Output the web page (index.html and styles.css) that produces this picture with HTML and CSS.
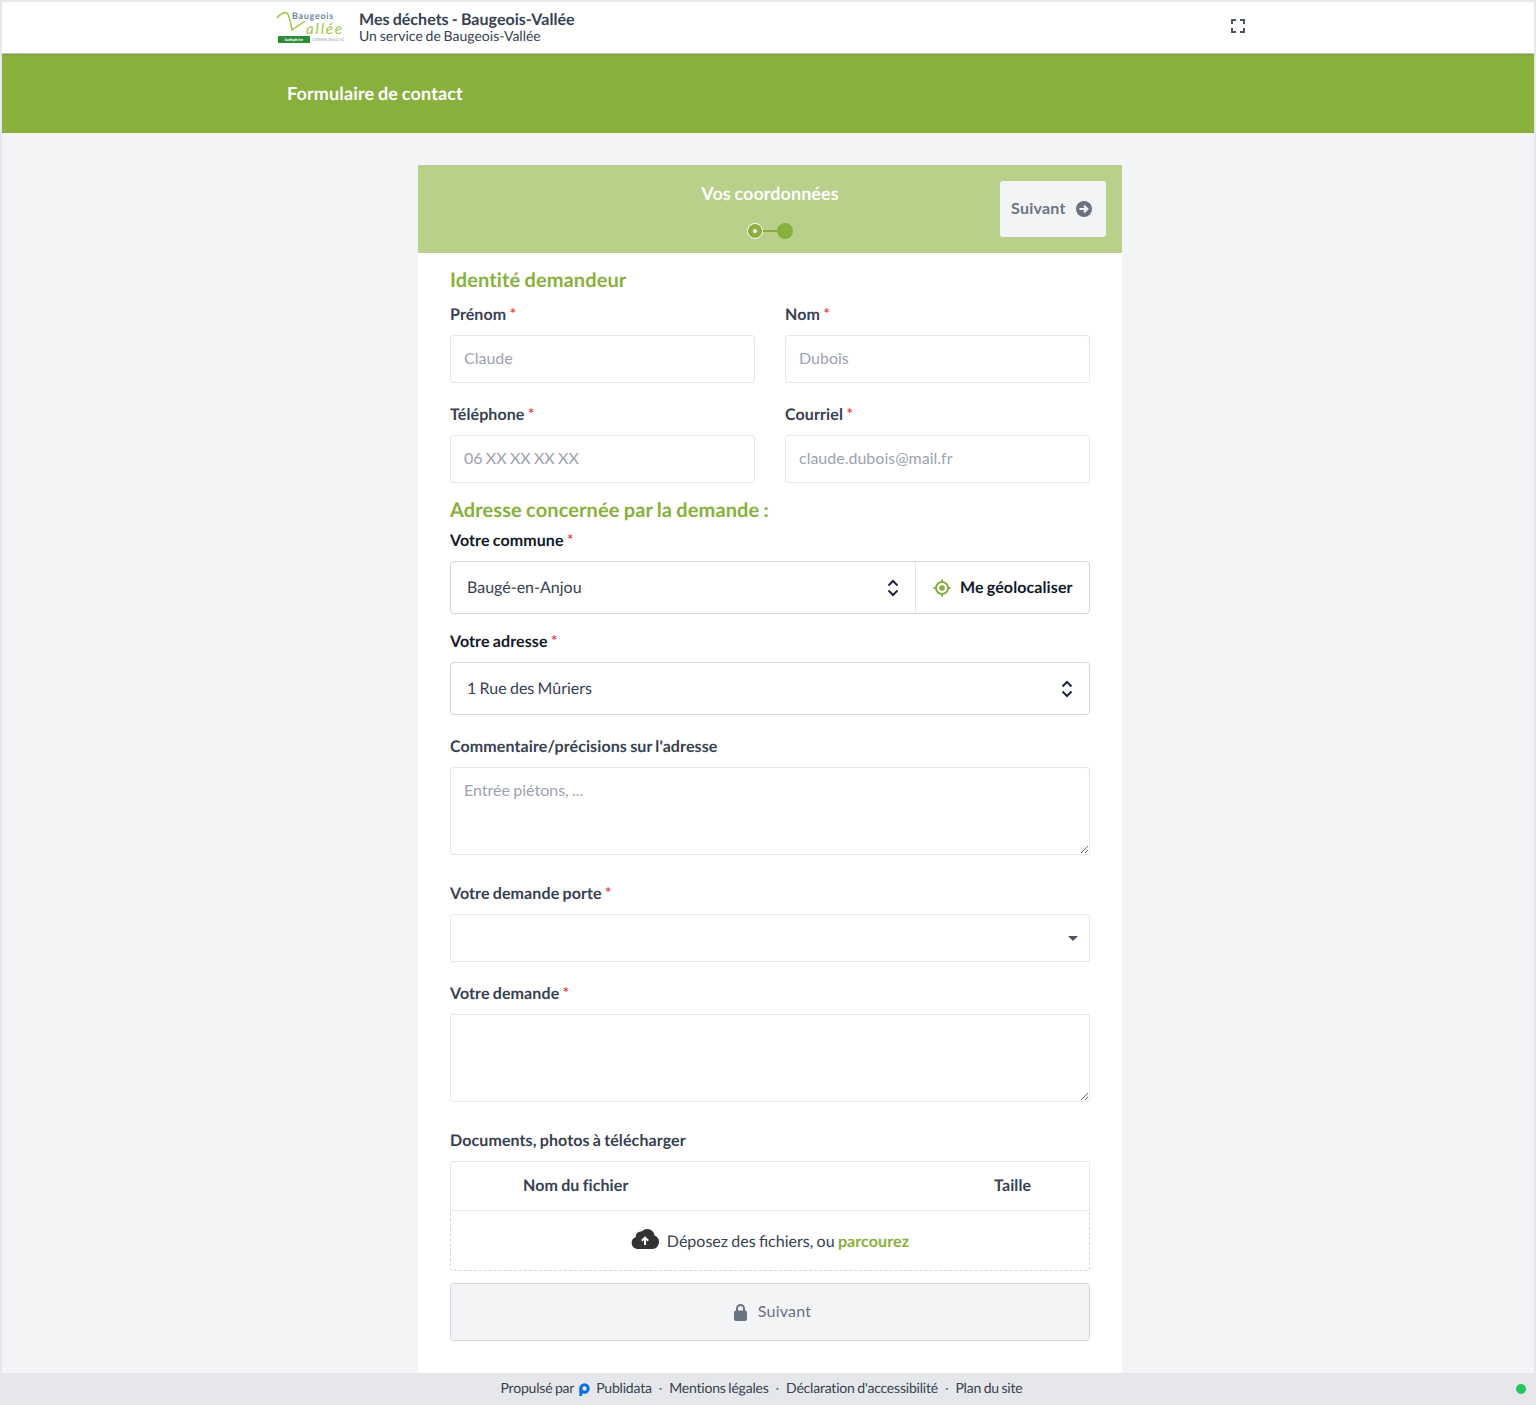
FILE: index.html
```html
<!DOCTYPE html>
<html lang="fr">
<head>
    <meta charset="UTF-8">
    <title>Formulaire de contact</title>
    <link rel="stylesheet" href="styles.css">
</head>
<body>
<header class="topbar">
    <div class="logo">
        <span class="logo-top">Baugeois</span>
        <svg class="logo-swoosh" width="68" height="24" viewBox="0 0 68 24">
            <path d="M1 7 Q6 1 11 2 Q13 3 16 19 Q22 15 29 10" fill="none" stroke="#9cc63f" stroke-width="1.500"/>
        </svg>
        <span class="logo-name">allée</span>
        <span class="logo-bar"><span class="logo-tag">la dépêche</span><span class="logo-com">COMMUNAUTÉ</span></span>
    </div>
    <div class="site-title">
        <div class="site-name">Mes déchets - Baugeois-Vallée</div>
        <div class="site-sub">Un service de Baugeois-Vallée</div>
    </div>
    <svg class="fullscreen" width="14" height="14" viewBox="0 0 14 14">
        <path d="M1 5V1H5M9 1H13V5M13 9V13H9M5 13H1V9" fill="none" stroke="#4b5563" stroke-width="2"/>
    </svg>
</header>
<div class="banner"><h1>Formulaire de contact</h1></div>
<main class="content">
    <div class="card">
        <div class="card-head">
            <div class="step">
                <div class="step-title">Vos coordonnées</div>
                <div class="dots">
                    <span class="dot dot-current"><i></i></span>
                    <span class="dot-line"></span>
                    <span class="dot"></span>
                </div>
            </div>
            <button class="btn-next" type="button"><span class="btn-text">Suivant</span>
                <svg width="16" height="16" viewBox="0 0 16 16">
                    <circle cx="8" cy="8" r="8" fill="#6b7280"/>
                    <path d="M3.500 8H11M8 4.800L11.300 8L8 11.200" fill="none" stroke="#f3f4f6" stroke-width="2.200"/>
                </svg>
            </button>
        </div>
        <form class="card-body">
            <h2 class="first">Identité demandeur</h2>
            <div class="cols">
                <div class="field">
                    <label>Prénom <em>*</em></label>
                    <input type="text" placeholder="Claude">
                </div>
                <div class="field">
                    <label>Nom <em>*</em></label>
                    <input type="text" placeholder="Dubois">
                </div>
                <div class="field">
                    <label>Téléphone <em>*</em></label>
                    <input type="text" placeholder="06 XX XX XX XX">
                </div>
                <div class="field">
                    <label>Courriel <em>*</em></label>
                    <input type="text" placeholder="claude.dubois@mail.fr">
                </div>
            </div>
            <h2>Adresse concernée par la demande :</h2>
            <div class="field field-s">
                <label class="dark">Votre commune <em>*</em></label>
                <div class="combo">
                    <div class="combo-value"><span class="combo-text">Baugé-en-Anjou</span>
                        <svg class="updown" width="12" height="18" viewBox="0 0 12 18"><path d="M1.500 6.500L6 2L10.500 6.500M1.500 11.500L6 16L10.500 11.500" fill="none" stroke="#1f2937" stroke-width="2"/></svg>
                    </div>
                    <div class="geo">
                        <svg width="18" height="18" viewBox="0 0 18 18">
                            <circle cx="9" cy="9" r="6" fill="none" stroke="#86ae3c" stroke-width="2"/>
                            <circle cx="9" cy="9" r="2.800" fill="#86ae3c"/>
                            <path d="M9 .5V3.500M9 14.500V17.500M.5 9H3.500M14.500 9H17.500" stroke="#86ae3c" stroke-width="2"/>
                        </svg>
                        <span class="combo-text">Me géolocaliser</span>
                    </div>
                </div>
            </div>
            <div class="field">
                <label class="dark">Votre adresse <em>*</em></label>
                <div class="combo">
                    <div class="combo-value"><span class="combo-text">1 Rue des Mûriers</span>
                        <svg class="updown" width="12" height="18" viewBox="0 0 12 18"><path d="M1.500 6.500L6 2L10.500 6.500M1.500 11.500L6 16L10.500 11.500" fill="none" stroke="#1f2937" stroke-width="2"/></svg>
                    </div>
                </div>
            </div>
            <div class="field field-l">
                <label>Commentaire/précisions sur l'adresse</label>
                <textarea placeholder="Entrée piétons, ..."></textarea>
            </div>
            <div class="field">
                <label>Votre demande porte <em>*</em></label>
                <div class="picker"><span class="caret"></span></div>
            </div>
            <div class="field field-l">
                <label>Votre demande <em>*</em></label>
                <textarea></textarea>
            </div>
            <div class="field field-0">
                <label>Documents, photos à télécharger</label>
                <div class="files">
                    <div class="files-head"><span class="col-name">Nom du fichier</span><span class="col-size">Taille</span></div>
                    <div class="files-drop">
                        <svg width="28" height="24" viewBox="0 0 28 24">
                            <path d="M6.500 23A6 6 0 0 1 4.800 11.300A5 5 0 0 1 10.500 5.500A7.500 7.500 0 0 1 23.500 9.500A7 7 0 0 1 21.500 23Z" fill="#333"/>
                            <path d="M14 19V12M10.800 14.800L14 11.600L17.200 14.800" fill="none" stroke="#fff" stroke-width="2"/>
                        </svg>
                        <span class="drop-text">Déposez des fichiers, ou <a href="#" class="browse">parcourez</a></span>
                    </div>
                </div>
            </div>
            <button class="btn-locked" type="button">
                <svg width="13" height="17" viewBox="0 0 13 17">
                    <path d="M3 7V4.500a3.500 3.500 0 0 1 7 0V7" fill="none" stroke="#6b7280" stroke-width="2"/>
                    <rect x="0" y="6.500" width="13" height="10.500" rx="2" fill="#6b7280"/>
                </svg>
                <span class="btn-text">Suivant</span>
            </button>
        </form>
    </div>
</main>
<footer class="foot">
    <div class="foot-links">
        <span>Propulsé par</span>
        <svg class="foot-p" width="11" height="13" viewBox="0 0 11 13"><circle cx="5.500" cy="5.500" r="3.700" fill="none" stroke="#0b6fe0" stroke-width="3"/><path d="M1.800 5.500V12" stroke="#0b6fe0" stroke-width="3" stroke-linecap="round"/></svg>
        <a href="#" class="pub">Publidata</a>
        <i>·</i>
        <a href="#">Mentions légales</a>
        <i>·</i>
        <a href="#">Déclaration d'accessibilité</a>
        <i>·</i>
        <a href="#">Plan du site</a>
    </div>
    <span class="status"></span>
</footer>
</body>
</html>
```

FILE: styles.css
```css
*{box-sizing: border-box;margin: 0;padding: 0;}
html,body{height: 1405px;}
body{display: flex;flex-direction: column;font-family: Lato, "Liberation Sans", sans-serif;font-size: 16px;color: #374151;background: #f3f4f6;border: 2px solid #e5e7eb;border-bottom: 0;overflow: hidden;text-rendering: geometricPrecision;word-spacing: -.8px;}
a{text-decoration: none;color: inherit;}

.topbar{position: relative;z-index: 1;display: flex;align-items: center;height: 51px;padding-left: 274px;background: #fff;box-shadow: 0 1px 2px rgba(0,0,0,.25);}
.logo{position: relative;width: 70px;height: 34px;flex: none;overflow: hidden;}
.logo-top{position: absolute;left: 16px;top: 0;font-size: 9px;font-weight: 700;line-height: 9px;letter-spacing: .7px;color: #71869c;word-spacing: 0;}
.logo-swoosh{position: absolute;left: 0;top: 0;}
.logo-name{position: absolute;left: 30px;top: 11px;font-size: 15px;line-height: 14px;letter-spacing: 1.800px;font-style: italic;color: #9cc63f;}
.logo-bar{position: absolute;left: 2px;top: 25px;display: flex;align-items: center;height: 7px;font-size: 4px;line-height: 7px;white-space: nowrap;}
.logo-tag{display: inline-block;width: 32px;height: 7px;background: #2e8b3a;color: #fff;text-align: center;font-weight: 700;}
.logo-com{margin-left: 2px;color: #8a8f96;letter-spacing: .25px;}
.site-title{margin-left: 13px;margin-bottom: 4px;color: #374151;}
.site-name{padding-top: 2px;font-size: 16px;font-weight: 700;line-height: 17px;letter-spacing: .03px;}
.site-sub{font-size: 14px;line-height: 15px;}
.fullscreen{position: absolute;left: 1229px;top: 17px;}

.banner{height: 80px;margin-top: 0;border-top: 1px solid #e5e7eb;padding: 0 0 2px 285px;background: #89b03d;display: flex;align-items: center;}
.banner h1{font-size: 18px;font-weight: 700;line-height: 28px;letter-spacing: .14px;color: #fff;}

.content{flex: 1;padding: 32px 0 0 4px;min-height: 0;display: flex;justify-content: center;}
.card{width: 704px;background: #fff;}
.card-head{position: relative;height: 88px;background: #b8d08a;}
.step{padding-top: 14px;text-align: center;}
.step-title{font-size: 18px;font-weight: 700;line-height: 28px;letter-spacing: .05px;color: #fff;}
.dots{display: flex;justify-content: center;align-items: center;margin-top: 16px;}
.dot{width: 16px;height: 16px;border-radius: 50%;background: #89b03d;display: flex;align-items: center;justify-content: center;}
.dot-current{border: 1px solid #fff;}
.dot-current i{width: 4px;height: 4px;border-radius: 50%;background: #fff;}
.dot-line{width: 14px;height: 2px;background: #89b03d;}
.btn-next{position: absolute;right: 16px;top: 16px;display: flex;align-items: center;gap: 10px;width: 106px;height: 56px;padding-left: 11px;border: 0;border-radius: 3px;background: #f3f4f6;font: 700 16px Lato, "Liberation Sans", sans-serif;letter-spacing: .25px;color: #6b7280;}
.btn-text{padding-bottom: 3px;}

.card-body{padding: 13px 32px 0;}
h2{font-size: 20px;font-weight: 700;line-height: 28px;letter-spacing: .11px;color: #89b03d;margin: 13px 0 4px;}
h2.first{margin: 0 0 8px;}
.cols{display: grid;grid-template-columns: 305px 305px;column-gap: 30px;}
.cols .field:nth-child(n+3){margin-bottom: 0;}
.field{margin-bottom: 19px;}
.field-s{margin-bottom: 15px;}
.field-l{margin-bottom: 26px;}
.field-0{margin-bottom: 12px;}
label{display: block;height: 24px;margin-bottom: 9px;padding-top: 1px;font-size: 16px;font-weight: 700;line-height: 24px;letter-spacing: .1px;color: #374151;}
label.dark{color: #111827;}
label em{font-style: normal;font-weight: 400;color: #e02424;}
input,textarea{display: block;width: 100%;border: 1px solid #e5e7eb;border-radius: 3px;background: #fff;font: 16px Lato, "Liberation Sans", sans-serif;word-spacing: -.8px;color: #374151;padding: 0 13px;}
input{height: 48px;padding-bottom: 3px;}
textarea{height: 88px;padding-top: 12px;}
input::placeholder,textarea::placeholder{color: #9ca3af;opacity: 1;}

.combo{display: flex;height: 53px;border: 1px solid #d1d5db;border-radius: 4px;background: #fff;}
.combo-value{flex: 1;display: flex;align-items: center;justify-content: space-between;padding: 0 16px;color: #374151;}
.combo-text{padding-bottom: 1px;}
.geo{display: flex;align-items: center;gap: 9px;width: 174px;padding-left: 17px;border-left: 1px solid #e5e7eb;font-weight: 700;letter-spacing: .1px;color: #111827;}
.picker{position: relative;height: 48px;border: 1px solid #e5e7eb;border-radius: 3px;background: #fff;}
.caret{position: absolute;right: 11px;top: 21px;border: 5px solid transparent;border-top-color: #4b5563;border-bottom: 0;}

.files-head{display: flex;height: 50px;align-items: center;padding-bottom: 2px;font-weight: 700;letter-spacing: .1px;color: #374151;border: 1px solid #e5e7eb;border-radius: 3px 3px 0 0;}
.col-name{margin-left: 72px;width: 471px;}
.files-drop{display: flex;align-items: center;justify-content: center;gap: 8px;height: 60px;border: 1px dashed #d1d5db;border-top: 0;border-radius: 0 0 3px 3px;}
.files-drop svg{margin-top: -6px;}
.drop-text{padding-top: 1px;}
.browse{font-weight: 700;letter-spacing: .1px;color: #89b03d;}
.btn-locked{display: flex;align-items: center;justify-content: center;gap: 11px;width: 100%;height: 58px;padding-left: 5px;border: 1px solid #d1d5db;border-radius: 3px;background: #f3f4f6;font: 16px Lato, "Liberation Sans", sans-serif;letter-spacing: .2px;color: #6b7280;}

.foot{position: relative;height: 32px;margin: 0 -2px;flex: none;display: flex;align-items: center;justify-content: center;padding: 0 13px 3px 0;background: #e5e7eb;font-size: 14px;letter-spacing: -.2px;color: #374151;}
.foot-links{display: flex;align-items: center;}
.foot-links i{font-style: normal;margin: 0 7px;color: #6b7280;}
.foot-p{margin: 3px 6px 0 5px;}
.status{position: absolute;right: 10px;top: 11px;width: 10px;height: 10px;border-radius: 50%;background: #22c55e;}
```
